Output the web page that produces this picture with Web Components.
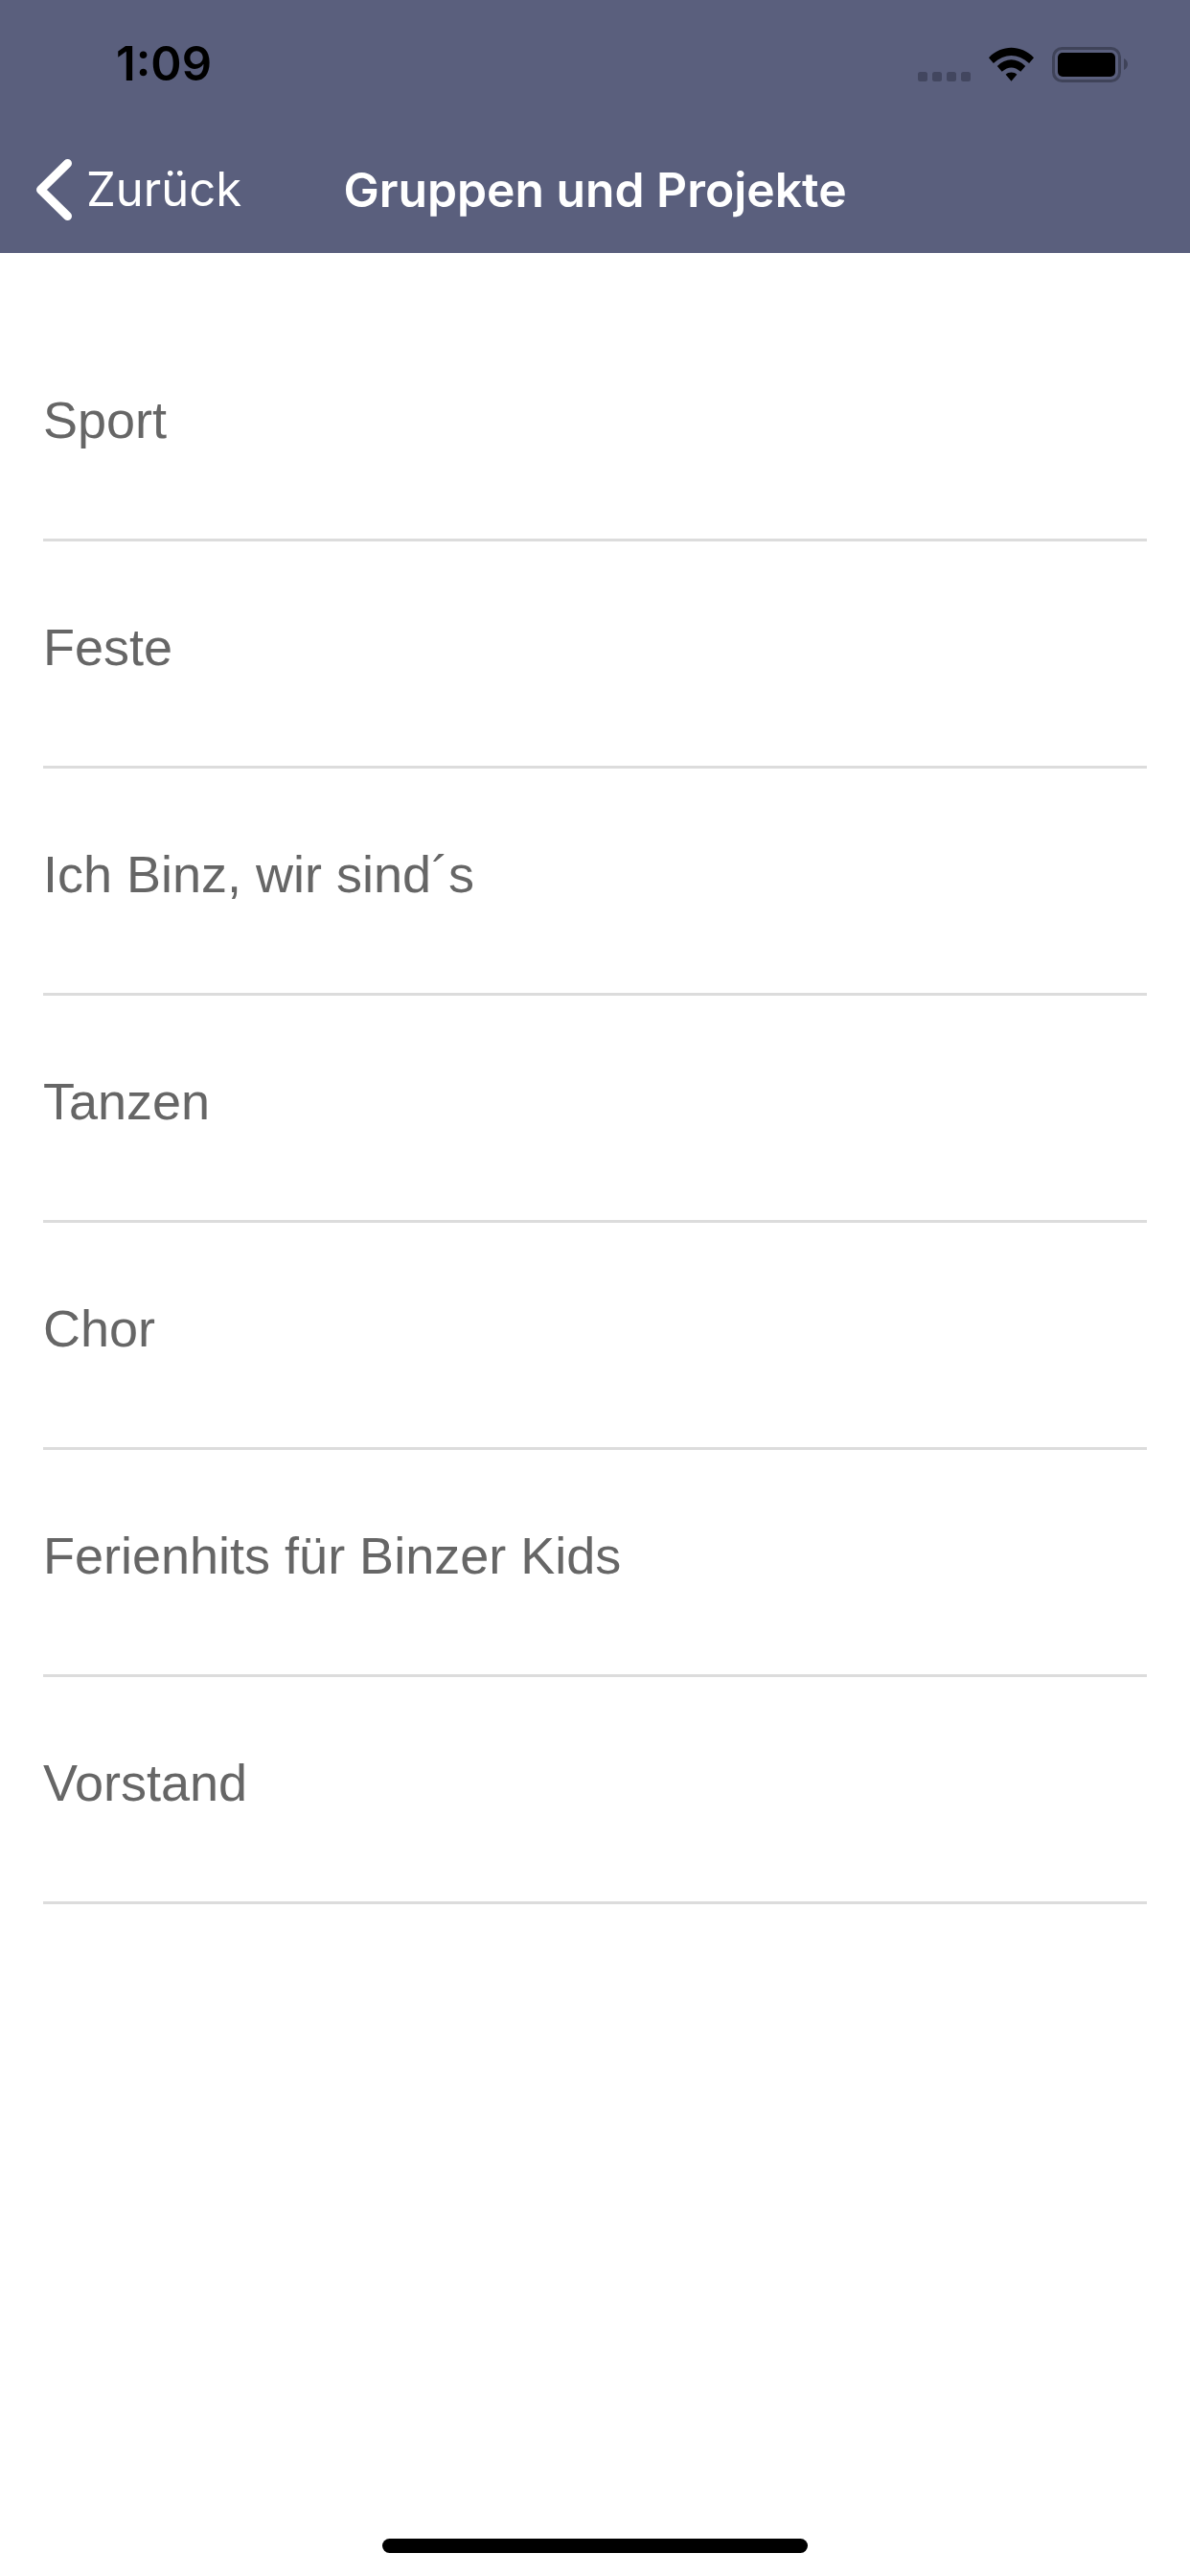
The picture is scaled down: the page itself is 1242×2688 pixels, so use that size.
<!DOCTYPE html>
<html lang="de">
<head>
<meta charset="utf-8">
<title>Gruppen und Projekte</title>
<style>
    html, body { margin: 0; padding: 0; background: #fff; }
    body { width: 1242px; height: 2688px; overflow: hidden; display: flex; flex-direction: column; }
</style>
</head>
<body>
<app-header title-text="Gruppen und Projekte" back-text="Zurück" time="1:09"></app-header>
<group-list>
    <group-row>Sport</group-row>
    <group-row>Feste</group-row>
    <group-row>Ich Binz, wir sind´s</group-row>
    <group-row>Tanzen</group-row>
    <group-row>Chor</group-row>
    <group-row>Ferienhits für Binzer Kids</group-row>
    <group-row>Vorstand</group-row>
</group-list>
<home-bar></home-bar>

<script>
// Status bar + navigation bar
class AppHeader extends HTMLElement {
    constructor() {
        super();
        const shadow = this.attachShadow({ mode: 'open' });
        shadow.innerHTML = `
            <style>
                :host {
                    display: block;
                    height: 264px;
                    flex: none;
                    background: #5a5f7d;
                    font-family: Inter, "Liberation Sans", sans-serif;
                }
                .status {
                    height: 134px;
                    display: flex;
                    align-items: flex-start;
                    justify-content: space-between;
                }
                .time {
                    margin: 38px 0 0 121px;
                    font-size: 49px;
                    line-height: 58px;
                    font-weight: 600;
                    color: #000;
                }
                .icons {
                    display: flex;
                    align-items: flex-start;
                    margin: 49px 65px 0 0;
                }
                .signal { display: flex; gap: 5px; margin: 26px 19px 0 0; }
                .signal i { width: 10px; height: 10px; border-radius: 2.5px; background: #42465f; }
                .wifi { display: block; margin-right: 19px; }
                .battery { display: block; }
                .nav {
                    box-sizing: border-box;
                    height: 130px;
                    padding-bottom: 3px;
                    display: grid;
                    grid-template-columns: 1fr auto 1fr;
                    align-items: center;
                    color: #fff;
                    font-size: 50px;
                }
                .back { display: flex; align-items: center; gap: 15px; padding-left: 38px; font-weight: 400; font-size: 49px; }
                .back svg { display: block; }
                .title { font-weight: 600; font-size: 49.8px; }
            </style>
            <div class="status">
                <span class="time">${this.getAttribute('time')}</span>
                <div class="icons">
                    <div class="signal"><i></i><i></i><i></i><i></i></div>
                    <svg class="wifi" width="47" height="36" viewBox="0 0 48 36">
                        <path d="M0 11 C14 -3 34 -3 48 11 L43 17 C31 6 17 6 5 17 Z M9 20 C18 11 30 11 39 20 L34 26 C27 20 21 20 14 26 Z M18 29 C21 26 27 26 30 29 L24 36 Z" fill="#000"/>
                    </svg>
                    <svg class="battery" width="79" height="37" viewBox="0 0 79 37">
                        <rect x="1.5" y="1.5" width="69" height="34" rx="9" fill="none" stroke="#3f4359" stroke-width="3"/>
                        <rect x="6" y="6" width="60" height="25" rx="5" fill="#000"/>
                        <path d="M75 12 C77.500 13 79 15.500 79 18 C79 20.500 77.500 23 75 24 Z" fill="#3f4359"/>
                    </svg>
                </div>
            </div>
            <div class="nav">
                <div class="back">
                    <svg width="37" height="64" viewBox="0 0 37 64">
                        <path d="M32.500 4.500 L4.500 32 L32.500 59.500" fill="none" stroke="#fff" stroke-width="9" stroke-linecap="round" stroke-linejoin="round"/>
                    </svg>
                    <span>${this.getAttribute('back-text')}</span>
                </div>
                <div class="title">${this.getAttribute('title-text')}</div>
                <div></div>
            </div>
        `;
    }
}

class GroupList extends HTMLElement {
    constructor() {
        super();
        const shadow = this.attachShadow({ mode: 'open' });
        shadow.innerHTML = `
            <style>
                :host {
                    display: flex;
                    flex-direction: column;
                    flex: 1;
                    padding: 64px 45px 0;
                    font-family: "Liberation Sans", Arial, sans-serif;
                }
            </style>
            <slot></slot>
        `;
    }
}

class GroupRow extends HTMLElement {
    constructor() {
        super();
        const shadow = this.attachShadow({ mode: 'open' });
        shadow.innerHTML = `
            <style>
                :host {
                    display: block;
                    box-sizing: border-box;
                    height: 237px;
                    padding-top: 79px;
                    border-bottom: 3px solid #dcdcdc;
                    font-size: 54px;
                    line-height: 62px;
                    color: #666;
                }
            </style>
            <slot></slot>
        `;
    }
}

class HomeBar extends HTMLElement {
    constructor() {
        super();
        const shadow = this.attachShadow({ mode: 'open' });
        shadow.innerHTML = `
            <style>
                :host {
                    display: flex;
                    flex: none;
                    justify-content: center;
                    padding-bottom: 24px;
                }
                div { width: 444px; height: 15px; border-radius: 8px; background: #000; }
            </style>
            <div></div>
        `;
    }
}

customElements.define('app-header', AppHeader);
customElements.define('group-list', GroupList);
customElements.define('group-row', GroupRow);
customElements.define('home-bar', HomeBar);
</script>
</body>
</html>
